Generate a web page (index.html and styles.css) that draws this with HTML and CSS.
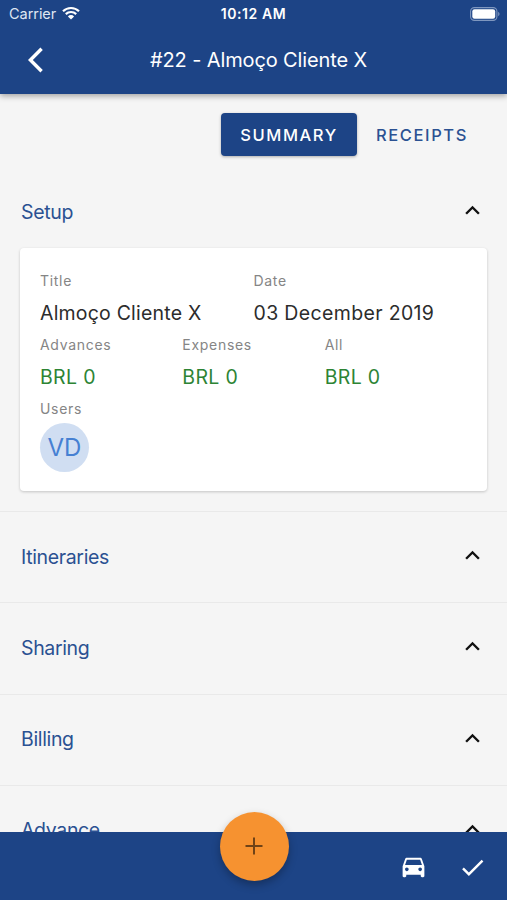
FILE: index.html
```html
<!DOCTYPE html>
<html lang="en">
<head>
  <meta charset="UTF-8">
  <meta name="viewport" content="width=device-width, initial-scale=1.0">
  <title>#22 - Almoço Cliente X</title>
  <link rel="stylesheet" href="styles.css">
</head>
<body>
  <div class="app">
    <header class="header">
      <div class="status">
        <div class="carrier">
          <span class="carrier-name">Carrier</span>
          <svg class="wifi" viewBox="0 0 18 14">
            <path d="M1 5.2a11.6 11.6 0 0 1 16 0" />
            <path d="M3.8 8.1a7.5 7.5 0 0 1 10.4 0" />
            <path class="dot" d="M9 13.6L5.9 10.4a4.4 4.4 0 0 1 6.2 0z" />
          </svg>
        </div>
        <span class="time">10:12 AM</span>
        <svg class="battery" viewBox="0 0 30 14">
          <rect class="shell" x=".6" y=".6" width="26.3" height="12.8" rx="3.8" />
          <rect x="2.3" y="2.3" width="22.9" height="9.4" rx="2.2" />
          <path class="cap" d="M28.2 4.8c1.8.7 1.8 3.7 0 4.4z" />
        </svg>
      </div>
      <div class="navbar">
        <svg class="back" viewBox="0 0 16 26"><path d="M13.6 1.8L2.4 13l11.2 11.2" /></svg>
        <h1 class="title">#22 - Almoço Cliente X</h1>
      </div>
    </header>

    <main class="content">
      <div class="tabs">
        <button class="tab active">SUMMARY</button>
        <button class="tab">RECEIPTS</button>
      </div>

      <section class="panel panel-setup">
        <div class="panel-head">
          <h2>Setup</h2>
          <svg class="chevron" viewBox="0 0 24 24"><path d="M7.41 15.41L12 10.83l4.59 4.58L18 14l-6-6-6 6z" /></svg>
        </div>
        <div class="card">
          <div class="field half">
            <div class="label">Title</div>
            <div class="value name">Almoço Cliente X</div>
          </div>
          <div class="field half">
            <div class="label">Date</div>
            <div class="value">03 December 2019</div>
          </div>
          <div class="field">
            <div class="label">Advances</div>
            <div class="value money">BRL 0</div>
          </div>
          <div class="field">
            <div class="label">Expenses</div>
            <div class="value money">BRL 0</div>
          </div>
          <div class="field">
            <div class="label">All</div>
            <div class="value money">BRL 0</div>
          </div>
          <div class="users">
            <div class="label">Users</div>
            <div class="avatar">VD</div>
          </div>
        </div>
      </section>

      <section class="panel">
        <div class="panel-head">
          <h2>Itineraries</h2>
          <svg class="chevron" viewBox="0 0 24 24"><path d="M7.41 15.41L12 10.83l4.59 4.58L18 14l-6-6-6 6z" /></svg>
        </div>
      </section>
      <section class="panel">
        <div class="panel-head">
          <h2>Sharing</h2>
          <svg class="chevron" viewBox="0 0 24 24"><path d="M7.41 15.41L12 10.83l4.59 4.58L18 14l-6-6-6 6z" /></svg>
        </div>
      </section>
      <section class="panel">
        <div class="panel-head">
          <h2>Billing</h2>
          <svg class="chevron" viewBox="0 0 24 24"><path d="M7.41 15.41L12 10.83l4.59 4.58L18 14l-6-6-6 6z" /></svg>
        </div>
      </section>
      <section class="panel">
        <div class="panel-head">
          <h2>Advance</h2>
          <svg class="chevron" viewBox="0 0 24 24"><path d="M7.41 15.41L12 10.83l4.59 4.58L18 14l-6-6-6 6z" /></svg>
        </div>
      </section>
    </main>

    <footer class="toolbar">
      <button class="fab">
        <svg viewBox="0 0 18 18"><path d="M9 .5v17M.5 9h17" /></svg>
      </button>
      <svg class="action" viewBox="0 0 24 24"><path d="M18.92 5.01C18.72 4.42 18.16 4 17.5 4h-11c-.66 0-1.21.42-1.42 1.01L3 11v8c0 .55.45 1 1 1h1c.55 0 1-.45 1-1v-1h12v1c0 .55.45 1 1 1h1c.55 0 1-.45 1-1v-8l-2.08-5.99zM6.5 15c-.83 0-1.5-.67-1.5-1.5S5.67 12 6.5 12s1.5.67 1.5 1.5S7.33 15 6.5 15zm11 0c-.83 0-1.5-.67-1.5-1.5s.67-1.5 1.5-1.5 1.5.67 1.5 1.5-.67 1.5-1.5 1.5zM5 10l1.5-4.5h11L19 10H5z" /></svg>
      <svg class="action" viewBox="0 0 24 24"><path d="M9 16.17L4.83 12l-1.42 1.41L9 19 21 7l-1.41-1.41z" /></svg>
    </footer>
  </div>
</body>
</html>
```

FILE: styles.css
```css
* { box-sizing: border-box; }

body {
  margin: 0;
  background: #f5f5f5;
  font-family: Inter, "Liberation Sans", sans-serif;
}

h1, h2 { margin: 0; font-weight: 400; }

button {
  border: 0;
  padding: 0;
  background: none;
  font-family: inherit;
}

svg { display: block; flex: none; }

.app {
  display: flex;
  flex-direction: column;
  height: 900px;
  overflow: hidden;
}

/* header */
.header {
  position: relative;
  z-index: 1;
  flex: none;
  height: 94px;
  background: #1d4486;
  color: #fff;
  box-shadow: 0 2px 6px rgba(0, 0, 0, .35);
}
.status {
  display: grid;
  grid-template-columns: 1fr auto 1fr;
  align-items: center;
  height: 27px;
  padding: 0 7px 0 9px;
}
.carrier {
  display: flex;
  align-items: center;
  gap: 6px;
  font-size: 14.5px;
  color: #dfe6f2;
}
.carrier-name { letter-spacing: -.05px; }
.wifi {
  width: 18px;
  height: 14px;
  margin-top: -2px;
  fill: none;
  stroke: #fff;
  stroke-width: 2.2;
}
.wifi .dot { fill: #fff; stroke: none; }
.time {
  margin-left: -2px;
  font-size: 14px;
  font-weight: 600;
  letter-spacing: .6px;
}
.battery {
  width: 30px;
  height: 14px;
  justify-self: end;
  fill: #fff;
}
.battery .shell { fill: none; stroke: #7f97bf; stroke-width: 1.1; }
.battery .cap { fill: #7f97bf; }

.navbar {
  display: grid;
  grid-template-columns: 60px 1fr 50px;
  align-items: center;
  height: 66px;
}
.back {
  width: 16px;
  height: 26px;
  margin-left: 28px;
  fill: none;
  stroke: #fff;
  stroke-width: 3.4;
}
.title {
  text-align: center;
  font-size: 20px;
  letter-spacing: -.12px;
  white-space: nowrap;
}

/* content */
.content {
  flex: 1;
  min-height: 0;
  overflow: hidden;
}
.tabs {
  display: flex;
  justify-content: flex-end;
  padding: 19px 20px 0 0;
}
.tab {
  height: 43px;
  width: 130px;
  border-radius: 4px;
  font-size: 16.5px;
  font-weight: 500;
  letter-spacing: 1.6px;
  color: #2b5192;
}
.tab.active {
  width: 136px;
  background: #1d4486;
  color: #fff;
  box-shadow: 0 1px 3px rgba(0, 0, 0, .3);
}

.panel {
  border-top: 1px solid #e9e9e9;
  height: 91.3px;
  padding: 0 20px;
}
.panel-setup {
  height: 355px;
  border-top: 0;
  padding-top: 10px;
}
.panel-head {
  display: flex;
  justify-content: space-between;
  align-items: center;
  height: 89px;
}
.panel-setup .panel-head {
  height: 82px;
  padding-top: 9px;
}
.panel h2 {
  padding-left: 1px;
  font-size: 19.5px;
  letter-spacing: -.35px;
  color: #2b5192;
}
.chevron {
  width: 29px;
  height: 29px;
  margin-bottom: 2px;
  fill: #111;
}

.card {
  display: grid;
  grid-template-columns: repeat(6, 1fr);
  height: 243px;
  padding: 19px 20px;
  border-radius: 4px;
  background: #fff;
  box-shadow: 0 1px 3px rgba(0, 0, 0, .2);
}
.field {
  grid-column: span 2;
  height: 63.5px;
  white-space: nowrap;
}
.field.half { grid-column: span 3; }
.users { grid-column: span 6; }
.label {
  height: 28px;
  line-height: 27px;
  font-size: 14px;
  letter-spacing: .7px;
  color: #858585;
}
.value {
  line-height: 37px;
  font-size: 19.5px;
  letter-spacing: .35px;
  color: #2c2c2c;
}
.name { letter-spacing: .2px; }
.money { color: #2d8434; }
.avatar {
  width: 49px;
  height: 49px;
  border-radius: 50%;
  background: #d0def2;
  text-align: center;
  line-height: 49px;
  font-size: 24px;
  color: #4680d2;
}

/* bottom bar */
.toolbar {
  position: relative;
  flex: none;
  display: flex;
  justify-content: flex-end;
  align-items: center;
  gap: 30px;
  height: 68px;
  padding: 2px 20px 0 0;
  background: #1d4486;
}
.action { width: 29px; height: 29px; fill: #fff; }
.fab {
  position: absolute;
  left: 50%;
  top: -20px;
  display: flex;
  align-items: center;
  justify-content: center;
  width: 69px;
  height: 69px;
  margin-left: -34px;
  border-radius: 50%;
  background: #f69230;
  box-shadow: 0 4px 9px rgba(0, 0, 0, .28);
}
.fab svg {
  width: 18px;
  height: 18px;
  margin-bottom: 1px;
  stroke: #6f4317;
  stroke-width: 2;
}
```
